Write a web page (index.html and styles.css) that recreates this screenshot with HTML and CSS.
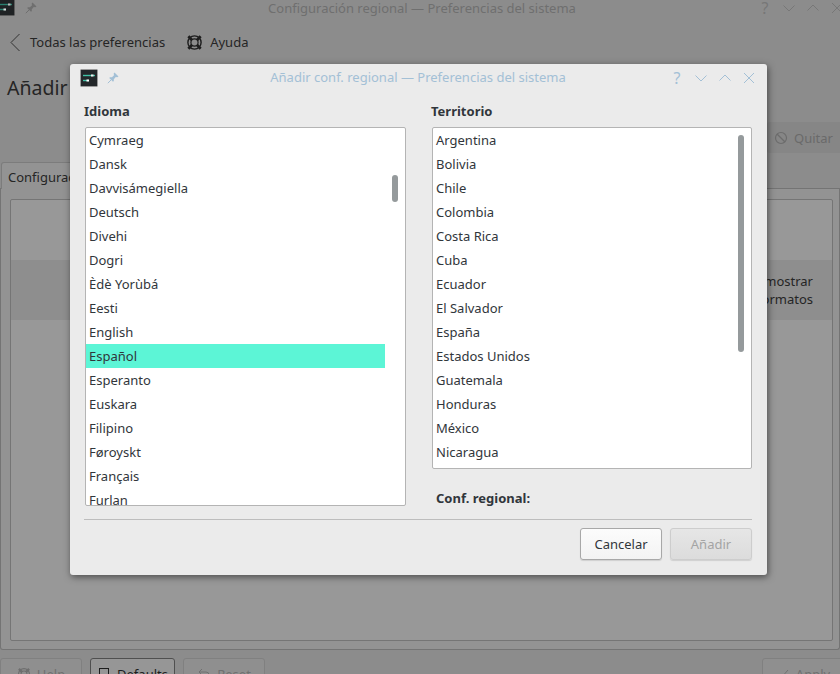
FILE: index.html
```html
<!DOCTYPE html>
<html lang="es">
<head>
    <meta charset="UTF-8">
    <meta name="viewport" content="width=device-width, initial-scale=1.0">
    <title>Configuración regional</title>
    <link rel="stylesheet" href="styles.css">
</head>
<body>
    <div class="main-window">
        <div class="titlebar main-titlebar">
            <svg class="app-icon" viewBox="0 0 18 18"><rect x="0.5" y="0.5" width="17" height="17" rx="1" fill="#1f2224" stroke="#5c5c5c"/><path d="M3 6.5h12" stroke="#2a7f6f" stroke-width="1.4"/><path d="M11 6.5h2.500" stroke="#bbb" stroke-width="2"/><path d="M3 11.500h6" stroke="#2a7f6f" stroke-width="1.4"/><path d="M6.500 11.500h2.500" stroke="#ddd" stroke-width="2"/></svg>
            <svg class="pin" viewBox="0 0 12 12"><path d="M7.500.5L11.500 4.500 10.300 5.300 8.800 5 6.800 7.200 6.800 9 6 9.800 2.200 6 3 5.200H5L7 3.200 6.700 1.500z" fill="#6f6f6f"/><path d="M4 8L.8 11.200" stroke="#6f6f6f"/></svg>
            <span class="title-text">Configuración regional — Preferencias del sistema</span>
            <div class="win-buttons">
                <span class="help-mark">?</span>
                <svg viewBox="0 0 14 14"><path d="M1.500 4.500L7 10l5.500-5.500" fill="none" stroke="#777"/></svg>
                <svg viewBox="0 0 14 14"><path d="M1.500 9.500L7 4l5.500 5.500" fill="none" stroke="#777"/></svg>
                <svg viewBox="0 0 14 14"><path d="M2 2l10 10M12 2L2 12" fill="none" stroke="#777"/></svg>
            </div>
        </div>

        <div class="toolbar">
            <svg class="back" viewBox="0 0 12 20"><path d="M10.500 2L2 10.500 10.500 19" fill="none" stroke="#333" stroke-width="1"/></svg>
            <span class="tool-label">Todas las preferencias</span>
            <svg class="lifebuoy" viewBox="0 0 18 18"><circle cx="9" cy="9" r="7" fill="none" stroke="#1e1e1e" stroke-width="1.500"/><circle cx="9" cy="9" r="3.800" fill="none" stroke="#1e1e1e" stroke-width="1.300"/><path d="M2.500 2.500l4 4M15.500 2.500l-4 4M2.500 15.500l4-4M15.500 15.500l-4-4" stroke="#1e1e1e" stroke-width="3"/></svg>
            <span>Ayuda</span>
        </div>

        <div class="page-head">
            <h1>Añadir</h1>
        </div>

        <div class="action-row">
            <div class="action-btn">
                <svg viewBox="0 0 14 14"><circle cx="7" cy="7" r="5.500" fill="none" stroke="#6c6c6c" stroke-width="1.200"/><path d="M3 3l8 8" stroke="#6c6c6c" stroke-width="1.200"/></svg>
                <span>Quitar</span>
            </div>
        </div>

        <div class="tab-strip">
            <div class="tab"><span>Configuración</span></div>
        </div>
        <div class="tab-panel">
            <div class="inner-frame">
                <div class="band">
                    <span class="band-text">mostrar<br>formatos</span>
                </div>
            </div>
        </div>

        <div class="bottom-row">
            <div class="bottom-btn btn-help">
                <svg viewBox="0 0 18 18"><circle cx="9" cy="9" r="7" fill="none" stroke="#6e6e6e" stroke-width="1.500"/><circle cx="9" cy="9" r="3.800" fill="none" stroke="#6e6e6e" stroke-width="1.300"/><path d="M2.500 2.500l4 4M15.500 2.500l-4 4M2.500 15.500l4-4M15.500 15.500l-4-4" stroke="#6e6e6e" stroke-width="3"/></svg>
                <span>Help</span>
            </div>
            <div class="bottom-btn btn-defaults">
                <svg viewBox="0 0 14 14"><rect x="2.500" y="1.500" width="9" height="11" fill="none" stroke="#1d1d1d"/></svg>
                <span>Defaults</span>
            </div>
            <div class="bottom-btn btn-reset">
                <svg viewBox="0 0 14 14"><path d="M5 2L2 5l3 3M2 5h7a3 3 0 0 1 3 3v3" fill="none" stroke="#707070"/></svg>
                <span>Reset</span>
            </div>
            <div class="bottom-btn btn-apply">
                <svg viewBox="0 0 14 14"><path d="M2 8l3 3 7-8" fill="none" stroke="#707070"/></svg>
                <span>Apply</span>
            </div>
        </div>
    </div>

    <div class="dialog">
        <div class="titlebar dialog-titlebar">
            <svg class="app-icon" viewBox="0 0 18 18"><rect x="0.500" y="0.500" width="17" height="17" rx="1" fill="#23272a" stroke="#9a9a9a"/><path d="M3 6.500h12" stroke="#3fbfa5" stroke-width="1.400"/><path d="M11 6.500h2.500" stroke="#f0f0f0" stroke-width="2"/><path d="M3 11.500h6" stroke="#3fbfa5" stroke-width="1.400"/><path d="M6.500 11.500h2.500" stroke="#fff" stroke-width="2"/></svg>
            <svg class="pin" viewBox="0 0 12 12"><path d="M7.500.5L11.500 4.500 10.300 5.300 8.800 5 6.800 7.200 6.800 9 6 9.800 2.200 6 3 5.200H5L7 3.200 6.700 1.500z" fill="#a3c0d6"/><path d="M4 8L.8 11.200" stroke="#a3c0d6"/></svg>
            <span class="title-text">Añadir conf. regional — Preferencias del sistema</span>
            <div class="win-buttons">
                <span class="help-mark">?</span>
                <svg viewBox="0 0 14 14"><path d="M1.500 4.500L7 10l5.500-5.500" fill="none" stroke="#a3c0d6"/></svg>
                <svg viewBox="0 0 14 14"><path d="M1.500 9.500L7 4l5.500 5.500" fill="none" stroke="#a3c0d6"/></svg>
                <svg viewBox="0 0 14 14"><path d="M2 2l10 10M12 2L2 12" fill="none" stroke="#a3c0d6"/></svg>
            </div>
        </div>

        <div class="dialog-body">
            <div class="column">
                <label class="list-label">Idioma</label>
                <div class="listbox lang-list">
                    <div class="row">Cymraeg</div>
                    <div class="row">Dansk</div>
                    <div class="row">Davvisámegiella</div>
                    <div class="row">Deutsch</div>
                    <div class="row">Divehi</div>
                    <div class="row">Dogri</div>
                    <div class="row">Èdè Yorùbá</div>
                    <div class="row">Eesti</div>
                    <div class="row">English</div>
                    <div class="row selected">Español</div>
                    <div class="row">Esperanto</div>
                    <div class="row">Euskara</div>
                    <div class="row">Filipino</div>
                    <div class="row">Føroyskt</div>
                    <div class="row">Français</div>
                    <div class="row">Furlan</div>
                    <div class="scroll-thumb lang-thumb"></div>
                </div>
            </div>
            <div class="column">
                <label class="list-label territory-label">Territorio</label>
                <div class="listbox territory-list">
                    <div class="row">Argentina</div>
                    <div class="row">Bolivia</div>
                    <div class="row">Chile</div>
                    <div class="row">Colombia</div>
                    <div class="row">Costa Rica</div>
                    <div class="row">Cuba</div>
                    <div class="row">Ecuador</div>
                    <div class="row">El Salvador</div>
                    <div class="row">España</div>
                    <div class="row">Estados Unidos</div>
                    <div class="row">Guatemala</div>
                    <div class="row">Honduras</div>
                    <div class="row">México</div>
                    <div class="row">Nicaragua</div>
                    <div class="scroll-thumb territory-thumb"></div>
                </div>
                <div class="locale-result">Conf. regional:</div>
            </div>
        </div>

        <div class="dialog-footer">
            <button class="dlg-btn">Cancelar</button>
            <button class="dlg-btn disabled">Añadir</button>
        </div>
    </div>
</body>
</html>
```

FILE: styles.css
```css
* {
    box-sizing: border-box;
}
html, body {
    margin: 0;
    height: 674px;
    overflow: hidden;
}
body {
    font-family: "Noto Sans", sans-serif;
    font-size: 13px;
    color: #31363b;
    background-color: #8c8c8c;
    position: relative;
}

/* parent window, dimmed behind the dialog */
.main-window {
    width: 840px;
    height: 674px;
    display: flex;
    flex-direction: column;
    overflow: hidden;
    color: #252525;
}
.titlebar {
    display: flex;
    align-items: center;
    position: relative;
}
.main-titlebar {
    height: 15px;
    flex: none;
    margin-bottom: 2px;
    color: #6f6f6f;
    margin-right: -4px;
}
.main-titlebar .app-icon {
    margin-left: -3px;
    margin-top: -1px;
}
.app-icon {
    width: 18px;
    height: 18px;
    flex: none;
}
.pin {
    width: 12px;
    height: 12px;
    margin-left: 10px;
    flex: none;
}
.title-text {
    position: absolute;
    left: 0;
    right: 0;
    text-align: center;
}
.win-buttons {
    margin-left: auto;
    display: flex;
    align-items: center;
    gap: 10px;
    position: relative;
}
.win-buttons svg {
    width: 14px;
    height: 14px;
}
.help-mark {
    font-size: 16px;
    line-height: 16px;
    width: 14px;
    text-align: center;
    color: #777;
}
.toolbar {
    height: 50px;
    flex: none;
    display: flex;
    align-items: center;
    padding-left: 9px;
}
.back {
    width: 12px;
    height: 20px;
    margin-right: 9px;
}
.tool-label {
    margin-right: 21px;
}
.lifebuoy {
    width: 17px;
    height: 17px;
    margin-right: 7px;
}
.page-head {
    height: 55px;
    flex: none;
    padding-left: 7px;
}
h1 {
    margin: 0;
    font-size: 19.5px;
    font-weight: 400;
    line-height: 42px;
    color: #252525;
}
.action-row {
    height: 31px;
    flex: none;
    display: flex;
    justify-content: flex-end;
}
.action-btn {
    width: 73px;
    display: flex;
    align-items: center;
    gap: 6px;
    padding-left: 7px;
    color: #6a6a6a;
    background-color: #868686;
    border-radius: 3px 0 0 3px;
}
.action-btn svg {
    width: 14px;
    height: 14px;
}
.tab-strip {
    height: 27px;
    margin-top: 9px;
    flex: none;
    border-bottom: 1px solid #747474;
    position: relative;
}
.tab {
    height: 27px;
    width: 90px;
    margin-left: 1px;
    border: 1px solid #7c7c7c;
    border-bottom: none;
    border-radius: 3px 3px 0 0;
    background-color: #939393;
    padding: 5px 0 0 6px;
    white-space: nowrap;
    overflow: hidden;
}
.tab-panel {
    height: 461px;
    flex: none;
    border: 1px solid #747474;
    border-top: none;
    background-color: #939393;
    padding: 10px 6px 9px 9px;
    border-radius: 0 0 3px 3px;
}
.inner-frame {
    height: 442px;
    border: 1px solid #757575;
    border-radius: 2px;
    background-color: #989898;
    padding-top: 60px;
}
.band {
    height: 60px;
    background-color: #8e8e8e;
    display: flex;
    align-items: center;
    justify-content: flex-end;
    padding-right: 19px;
    line-height: 18px;
    white-space: nowrap;
}
.band-text {
    text-align: right;
}
.bottom-row {
    flex: none;
    display: flex;
    margin-top: 8px;
    height: 40px;
}
.bottom-btn {
    height: 32px;
    display: flex;
    align-items: center;
    justify-content: center;
    gap: 6px;
    border: 1px solid #808080;
    border-radius: 3px;
    background-color: #8f8f8f;
    color: #707070;
}
.bottom-btn svg {
    width: 14px;
    height: 14px;
}
.btn-help {
    width: 82px;
    margin-right: 8px;
}
.btn-defaults {
    width: 85px;
    margin-right: 8px;
    border-color: #4f4f4f;
    background-color: #969696;
    color: #1d1d1d;
}
.btn-reset {
    width: 82px;
}
.btn-apply {
    width: 82px;
    margin-left: auto;
    margin-right: -4px;
}

/* dialog */
.dialog {
    position: absolute;
    left: 70px;
    top: 64px;
    width: 697px;
    height: 511px;
    background-color: #ebebeb;
    border-radius: 3px;
    box-shadow: 1px 2px 7px rgba(0, 0, 0, 0.5);
    padding: 0 15px 0 14px;
    display: flex;
    flex-direction: column;
}
.dialog-titlebar {
    height: 27px;
    flex: none;
    color: #a3c0d6;
    margin-left: -4px;
    margin-right: -4px;
}
.dialog-titlebar .pin {
    margin-left: 9px;
}
.dialog-titlebar .title-text {
    left: 0;
    top: 4px;
}
.dialog-titlebar .help-mark {
    color: #a3c0d6;
}
.dialog-body {
    display: grid;
    grid-template-columns: 322px 320px;
    column-gap: 26px;
    flex: none;
    height: 429px;
    border-bottom: 1px solid #bdbdbd;
}
.column {
    display: flex;
    flex-direction: column;
    min-width: 0;
}
.list-label {
    font-weight: 700;
    line-height: 18px;
    margin-top: 11px;
    margin-bottom: 7px;
}
.territory-label {
    margin-left: -1px;
}
.listbox {
    position: relative;
    background-color: #fff;
    border: 1px solid #b4b4b4;
    border-radius: 2px;
    overflow: hidden;
    flex: none;
}
.lang-list {
    height: 379px;
    margin-left: 1px;
}
.territory-list {
    height: 342px;
}
.row {
    height: 24px;
    line-height: 24px;
    padding-left: 3px;
}
.selected {
    background-color: #5cf5d6;
    margin-right: 20px;
}
.scroll-thumb {
    position: absolute;
    width: 6px;
    border-radius: 3px;
    background-color: #959a9c;
}
.lang-thumb {
    right: 7px;
    top: 47px;
    height: 27px;
}
.territory-thumb {
    right: 7px;
    top: 7px;
    height: 217px;
}
.locale-result {
    font-weight: 700;
    margin-top: 20px;
    margin-left: 4px;
    line-height: 18px;
}
.dialog-footer {
    display: flex;
    justify-content: flex-end;
    gap: 8px;
    padding-top: 8px;
}
.dlg-btn {
    width: 82px;
    height: 32px;
    font: inherit;
    color: #31363b;
    background: linear-gradient(#fcfcfc, #f3f3f3);
    border: 1px solid #a8a8a8;
    border-radius: 3px;
    box-shadow: 0 1px 1px rgba(0, 0, 0, 0.12);
    padding: 0;
}
.dlg-btn.disabled {
    color: #a4a4a4;
    background: linear-gradient(#e6e6e6, #dcdcdc);
    border-color: #cdcdcd;
}
```
